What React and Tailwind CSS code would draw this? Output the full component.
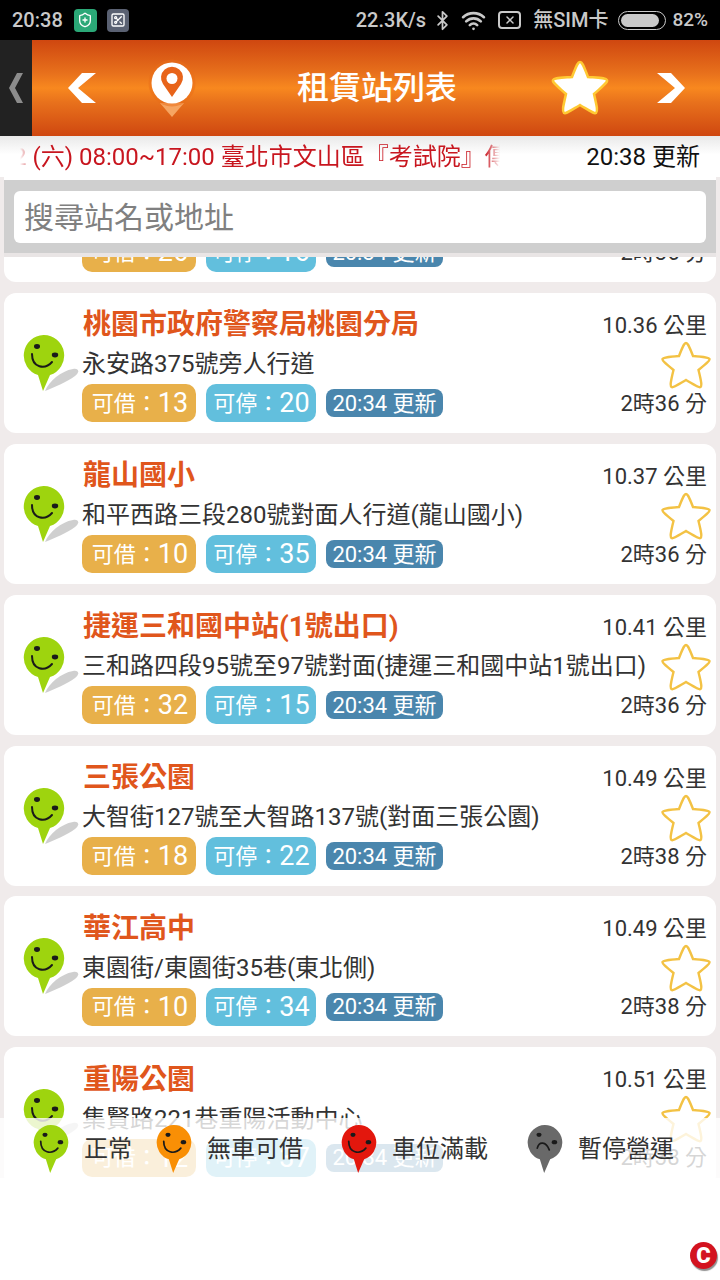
import { Bluetooth, ScissorsSquare, ShieldPlus, Wifi, X } from "lucide-react";

const fontStack = "font-['Roboto','Noto_Sans_CJK_TC',sans-serif]";

const stations = [
  { name: "", address: "", bike: 26, park: 16, dist: "", time: "2時36 分" },
  { name: "桃園市政府警察局桃園分局", address: "永安路375號旁人行道", bike: 13, park: 20, dist: "10.36 公里", time: "2時36 分" },
  { name: "龍山國小", address: "和平西路三段280號對面人行道(龍山國小)", bike: 10, park: 35, dist: "10.37 公里", time: "2時36 分" },
  { name: "捷運三和國中站(1號出口)", address: "三和路四段95號至97號對面(捷運三和國中站1號出口)", bike: 32, park: 15, dist: "10.41 公里", time: "2時36 分" },
  { name: "三張公園", address: "大智街127號至大智路137號(對面三張公園)", bike: 18, park: 22, dist: "10.49 公里", time: "2時38 分" },
  { name: "華江高中", address: "東園街/東園街35巷(東北側)", bike: 10, park: 34, dist: "10.49 公里", time: "2時38 分" },
  { name: "重陽公園", address: "集賢路221巷重陽活動中心", bike: 12, park: 37, dist: "10.51 公里", time: "2時38 分" },
];

const legend = [
  { label: "正常", color: "#9ed40e", width: "w-[123px]" },
  { label: "無車可借", color: "#f98f05", width: "w-[185px]" },
  { label: "車位滿載", color: "#e3170d", width: "w-[186px]" },
  { label: "暫停營運", color: "#696969", width: "w-[170px]", sad: true },
];

// smiley map pin, with optional ground shadow
const Pin = ({ color, shadow, sad, className }) => (
  <svg viewBox="0 0 56 56" className={className}>
    {shadow && <path d="M22 56 C26 46 38 36 50 34 C56 33 57 37 52 41 C44 47 32 52 22 56 Z" fill="#cfcfcf" />}
    <path d="M20.5 0 A20.5 20.5 0 0 1 27 40 L20 56 L15 40 A20.5 20.5 0 0 1 20.5 0 Z" fill={color} />
    <ellipse cx="14" cy="11.5" rx="3" ry="2.4" fill="#1a1a1a" />
    <ellipse cx="32" cy="20" rx="3.2" ry="2.4" fill="#1a1a1a" />
    {sad ? (
      <path d="M12 27 C14 19 22 19 26 29" fill="none" stroke="#1a1a1a" strokeWidth="2" strokeLinecap="round" />
    ) : (
      <path d="M9 19 C9 33 22 35 29 27" fill="none" stroke="#1a1a1a" strokeWidth="2" strokeLinecap="round" />
    )}
  </svg>
);

const StarOutline = () => (
  <svg viewBox="0 0 50 48" className="w-[50px] h-[48px] shrink-0">
    <path
      d="M25 2 C26.5 2 27.5 3.5 32 15 C44 16 48 16.5 48.5 18 C49 19.5 46 22 37.5 29 C40.5 41 41 45 39.5 46 C38 47 34.5 44.5 25 39 C15.5 44.5 12 47 10.5 46 C9 45 9.5 41 12.5 29 C4 22 1 19.5 1.5 18 C2 16.5 6 16 18 15 C22.5 3.5 23.5 2 25 2 Z"
      fill="#fff"
      stroke="#f3c244"
      strokeWidth="2.4"
    />
  </svg>
);

const Card = ({ s }) => (
  <div className="flex items-center h-[140px] shrink-0 mx-1 pl-[19px] pr-[9px] bg-white rounded-xl">
    <Pin color="#9ed40e" shadow className="w-14 h-14 shrink-0" />
    <div className="flex-1 min-w-0 ml-1 whitespace-nowrap">
      <div className="h-[32px] mt-[6px] text-[28px] leading-8 font-bold text-[#e0561c]">{s.name}</div>
      <div className="h-[34px] mt-[6px] -ml-px text-[24px] leading-[34px] text-[#333]">{s.address}</div>
      <div className="flex items-center gap-[10px] mt-[3px] -ml-px text-white">
        <div className="flex items-center justify-center w-[114px] h-[38px] pl-[2px] rounded-[10px] bg-[#e8b04a] text-[22px]">
          可借：<span className="text-[27px]">{s.bike}</span>
        </div>
        <div className="flex items-center justify-center w-[110px] h-[38px] pl-px rounded-[10px] bg-[#62bfdd] text-[22px]">
          可停：<span className="text-[27px]">{s.park}</span>
        </div>
        <div className="flex items-center justify-center w-[117px] h-[28px] rounded-lg bg-[#4a86ad] text-[22px]">20:34 更新</div>
      </div>
    </div>
    <div className="flex flex-col items-end shrink-0 w-[60px] whitespace-nowrap text-[22px] text-[#333]">
      <div className="h-[30px] leading-[30px] mt-[4px]">{s.dist}</div>
      <div className="-mr-1">
        <StarOutline />
      </div>
      <div className="h-[30px] leading-[30px]">{s.time}</div>
    </div>
  </div>
);

export default function App() {
  return (
    <div className={`relative w-[720px] h-[1280px] overflow-hidden bg-white ${fontStack}`}>
      {/* Status bar */}
      <div className="flex items-center h-10 pl-3 pr-[12px] bg-black text-[#c9c9c9] text-[20px] font-medium">
        <span>20:38</span>
        <div className="flex items-center justify-center ml-[11px] w-[23px] h-[23px] rounded bg-[#2ba877]">
          <ShieldPlus size={16} className="text-white" />
        </div>
        <div className="flex items-center justify-center ml-[10px] w-[22px] h-[23px] rounded bg-[#5a6172]">
          <ScissorsSquare size={16} className="text-white" />
        </div>
        <span className="ml-auto">22.3K/s</span>
        <Bluetooth size={21} className="ml-[6px]" />
        <Wifi size={25} strokeWidth={2.6} className="ml-[8px]" />
        <div className="flex items-center justify-center ml-[12px] w-[23px] h-[18px] rounded-sm border-2 border-[#c9c9c9]">
          <X size={12} strokeWidth={3} />
        </div>
        <span className="ml-[12px]">無SIM卡</span>
        <div className="flex items-center ml-[10px] w-[48px] h-[19px] p-[2px] rounded-full border border-[#c9c9c9]">
          <div className="w-[38px] h-full rounded-full bg-[#c9c9c9]" />
        </div>
        <span className="ml-[6px] text-[19px]">82%</span>
      </div>

      {/* Header */}
      <div className="flex items-center h-24 bg-[linear-gradient(180deg,#cf4710_0%,#e8711c_35%,#f8881f_50%,#e8711c_65%,#cf4710_100%)]">
        <div className="flex items-center justify-center self-stretch w-8 bg-[#222]">
          <svg viewBox="0 0 16 32" className="w-4 h-8">
            <path d="M15 1 L7 16 L15 31 L9 31 L1 16 L9 1 Z" fill="#8c8c8c" />
          </svg>
        </div>
        <svg viewBox="0 0 32 32" className="w-8 h-8 ml-[34px]">
          <path d="M30 1 L12 16 L30 31 L16 31 L2 16 L16 1 Z" fill="#fff" />
        </svg>
        <svg viewBox="0 0 48 60" className="w-12 h-[60px] ml-[50px] mt-[2px]">
          <path d="M12 44 L24 58 L36 44 Z" fill="#f6a562" />
          <circle cx="24" cy="24" r="23.5" fill="#ea6d17" fillOpacity="0.5" />
          <circle cx="24" cy="24" r="20.5" fill="#fff" />
          <path d="M24 38 L15 25 A11 11 0 1 1 33 25 Z" fill="#e8641a" />
          <circle cx="24" cy="19.5" r="5.5" fill="#fff" />
        </svg>
        <div className="w-[160px] ml-[101px] text-[32px] font-medium text-white whitespace-nowrap">租賃站列表</div>
        <svg viewBox="0 0 60 58" className="w-[60px] h-[58px] ml-[93px]">
          <path
            d="M30 3 C32 3 33 5 38 18 C52 19 56 19 57 21 C58 23 54 26 44 35 C47 48 48 52 46 54 C44 55 40 52 30 46 C20 52 16 55 14 54 C12 52 13 48 16 35 C6 26 2 23 3 21 C4 19 8 19 22 18 C27 5 28 3 30 3 Z"
            fill="#fff"
            stroke="#ffc933"
            strokeWidth="2.5"
          />
        </svg>
        <svg viewBox="0 0 32 32" className="w-8 h-8 ml-[45px]">
          <path d="M2 1 L16 1 L30 16 L16 31 L2 31 L20 16 Z" fill="#fff" />
        </svg>
      </div>

      {/* Ticker */}
      <div className="flex items-center h-[41px] bg-[linear-gradient(180deg,#e9e9e9_0%,#ffffff_45%)]">
        <div className="w-[480px] ml-5 overflow-hidden whitespace-nowrap text-[24px] text-[#c8161f] [mask-image:linear-gradient(90deg,transparent,#000_14px,#000_465px,transparent)]">
          <span className="inline-block -ml-[7px]">2 (六) 08:00~17:00 臺北市文山區『考試院』傳電</span>
        </div>
        <span className="ml-auto mr-5 text-[24px] text-[#111]">20:38 更新</span>
      </div>

      {/* Station list */}
      <div className="h-[1001px] overflow-hidden bg-[#f0ebeb]">
        <div className="flex flex-col gap-[10.9px] -mt-[35px]">
          {stations.map((s, i) => (
            <Card key={i} s={s} />
          ))}
        </div>
      </div>

      {/* Search box floats over the list */}
      <div className="absolute top-[180px] left-1 right-1 h-[73px] px-[10px] pt-[11px] bg-[#cfcfcf] shadow-[0_4px_0_#e9e5e5]">
        <div className="flex items-center h-[52px] px-[10px] rounded-md bg-white text-[30px] text-[#808080]">搜尋站名或地址</div>
      </div>

      {/* Legend floats over the list */}
      <div className="absolute top-[1118px] left-0 right-0 flex items-start h-[60px] pl-[33px] pt-[7px] bg-white/80 text-[24px] text-[#333]">
        {legend.map((l) => (
          <div key={l.label} className={`flex items-center shrink-0 ${l.width}`}>
            <Pin color={l.color} sad={l.sad} className="w-[48px] h-[48px] mr-[3px] shrink-0" />
            <span className="-mt-[1px] whitespace-nowrap">{l.label}</span>
          </div>
        ))}
      </div>

      {/* Corner badge */}
      <div className="absolute top-[1242px] left-[690px] flex items-center justify-center w-[27px] h-[27px] rounded-full bg-[#d3131f] shadow-[1px_2px_1px_#8f8f8f] text-[22px] leading-none font-black text-white">C</div>
    </div>
  );
}
